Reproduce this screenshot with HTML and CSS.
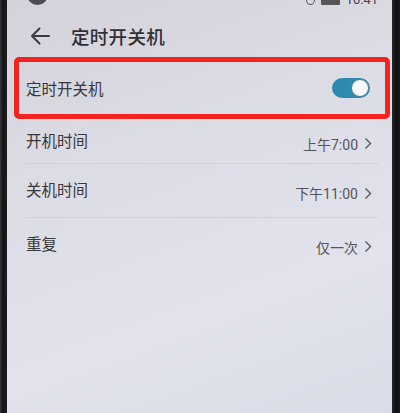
FILE: index.html
```html
<!DOCTYPE html>
<html lang="zh-CN">
<head>
<meta charset="utf-8">
<link rel="stylesheet" href="styles.css">
<title>定时开关机</title>
</head>
<body>
<div class="phone">
  <div class="bezel-left"></div>
  <div class="screen">
    <div class="status">
      <div class="cam"></div>
      <div class="status-right">
        <div class="ring"></div>
        <div class="batt"></div>
        <span class="clock">10:41</span>
      </div>
    </div>
    <div class="header">
      <svg class="back" width="20" height="18" viewBox="0 0 20 18">
        <path d="M19 9H2M9.5 1.5L2 9l7.5 7.5" fill="none" stroke="#3a3a3e" stroke-width="2" stroke-linecap="round" stroke-linejoin="round"/>
      </svg>
      <span class="title">定时开关机</span>
    </div>
    <div class="highlight">
      <span class="label">定时开关机</span>
      <div class="toggle"><div class="knob"></div></div>
    </div>
    <div class="row row-a">
      <span class="label">开机时间</span>
      <span class="value">上午7:00<svg class="chev" width="8" height="13" viewBox="0 0 8 13"><path d="M1.5 1.5l5 5-5 5" fill="none" stroke="#57575c" stroke-width="1.4"/></svg></span>
    </div>
    <div class="row row-b">
      <span class="label">关机时间</span>
      <span class="value">下午11:00<svg class="chev" width="8" height="13" viewBox="0 0 8 13"><path d="M1.5 1.5l5 5-5 5" fill="none" stroke="#57575c" stroke-width="1.4"/></svg></span>
    </div>
    <div class="row row-c">
      <span class="label">重复</span>
      <span class="value">仅一次<svg class="chev" width="8" height="13" viewBox="0 0 8 13"><path d="M1.5 1.5l5 5-5 5" fill="none" stroke="#57575c" stroke-width="1.4"/></svg></span>
    </div>
  </div>
  <div class="bezel-right"></div>
</div>
</body>
</html>
```

FILE: styles.css
```css
html, body {
  margin: 0;
  padding: 0;
  width: 400px;
  height: 413px;
  overflow: hidden;
  background: #1c1c1e;
}

.phone {
  display: flex;
  width: 400px;
  height: 413px;
  font-family: "Noto Sans CJK SC", "Noto Sans", sans-serif;
}

.bezel-left {
  width: 7px;
  background: linear-gradient(to right, #3a3a3c, #141416 40%, #1e1e20);
}

.bezel-right {
  width: 8px;
  background: linear-gradient(to right, #2a2a2e, #0f0f11 50%, #1a1a1c);
}

.screen {
  flex: 1;
  display: flex;
  flex-direction: column;
  background: linear-gradient(160deg, #d4d2db 0%, #dcdce5 35%, #e1e2ec 70%, #d9dce6 100%);
}

.status {
  height: 5px;
  display: flex;
  align-items: flex-end;
  justify-content: space-between;
  overflow: hidden;
}

.cam {
  width: 21px;
  height: 21px;
  margin-left: 20px;
  border-radius: 50%;
  background: #4e4c52;
  flex: none;
}

.status-right {
  display: flex;
  align-items: flex-end;
  gap: 6px;
  margin-right: 14px;
}

.ring {
  width: 7px;
  height: 9px;
  border: 1.5px solid #55555a;
  border-radius: 50%;
}

.batt {
  width: 19px;
  height: 8px;
  background: #55555a;
  border-radius: 1px;
}

.clock {
  font-family: Roboto, "Noto Sans CJK SC", sans-serif;
  font-size: 13px;
  line-height: 13px;
  color: #444448;
  margin-bottom: -1px;
}

.header {
  height: 42px;
  padding-top: 10px;
  display: flex;
  align-items: center;
}

.back {
  margin-left: 23px;
  flex: none;
}

.title {
  margin-left: 21px;
  font-size: 18.5px;
  font-weight: 500;
  color: #303033;
  letter-spacing: 0.3px;
}

.highlight {
  height: 52px;
  margin-left: 7px;
  margin-right: 2px;
  border: 5px solid #f3231f;
  border-radius: 5px;
  display: flex;
  align-items: center;
  justify-content: space-between;
  padding: 0 15px 0 7px;
}

.label {
  font-size: 15.5px;
  color: #38383c;
}

.toggle {
  width: 38px;
  height: 20px;
  border-radius: 10px;
  background: #2d8bb0;
  display: flex;
  align-items: center;
  justify-content: flex-end;
  padding-right: 1px;
  box-sizing: border-box;
}

.knob {
  width: 18px;
  height: 18px;
  box-sizing: border-box;
  border-radius: 50%;
  background: #f6f8fa;
  border: 1.6px solid #5f7d8b;
}

.row {
  display: flex;
  align-items: center;
  justify-content: space-between;
  margin-left: 19px;
  margin-right: 14px;
  padding-right: 6px;
}

.row .label {
  margin-bottom: 3px;
}

.row-a {
  height: 44px;
  border-bottom: 1px solid #cfd0d9;
}

.row-b {
  height: 53px;
  border-bottom: 1px solid #cfd0d9;
}

.row-c {
  height: 52px;
}

.value {
  display: flex;
  align-items: center;
  gap: 6px;
  font-family: Roboto, "Noto Sans CJK SC", sans-serif;
  font-size: 14px;
  color: #55555a;
  margin-top: 5px;
}

.chev {
  flex: none;
}
```
